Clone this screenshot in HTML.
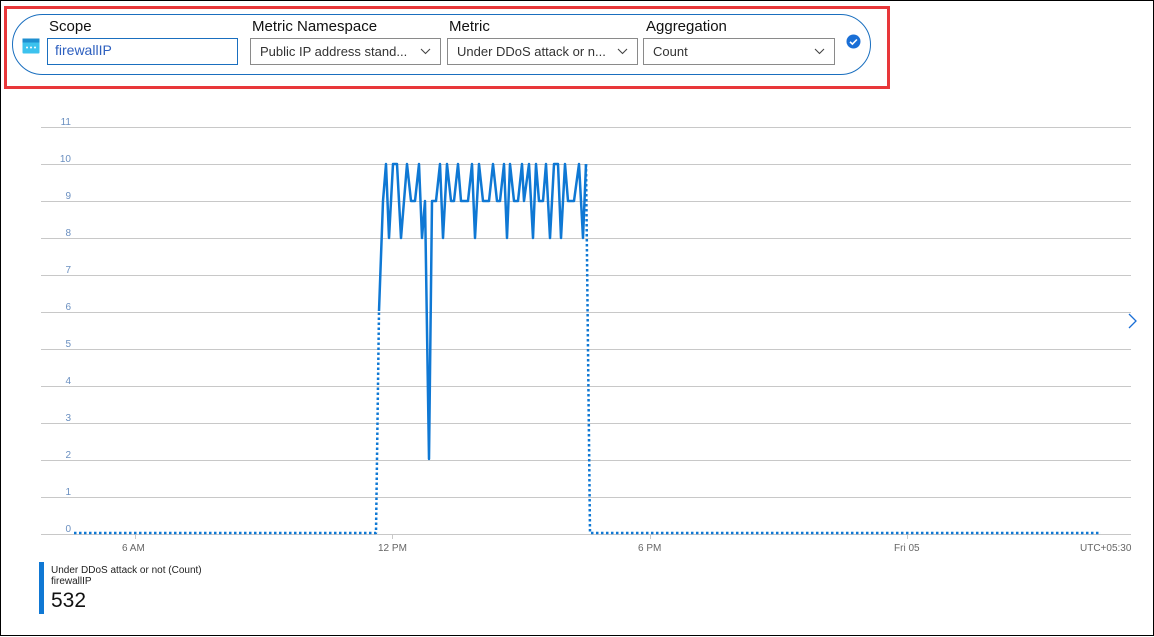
<!DOCTYPE html>
<html><head><meta charset="utf-8"><style>
*{margin:0;padding:0;box-sizing:border-box}
body{width:1154px;height:636px;background:#fff;font-family:"Segoe UI","Liberation Sans",sans-serif;position:relative;overflow:hidden;border:1px solid #000}
.red{position:absolute;left:3px;top:5px;width:886px;height:83px;border:3px solid #e8373a}
.pill{position:absolute;left:11px;top:13px;width:859px;height:61px;border:1px solid #1a6fbf;border-radius:31px}
.lbl{position:absolute;top:17px;font-size:15px;color:#111}
.box{position:absolute;top:37px;height:27px;border:1px solid #8a8a8a;font-size:13px;color:#333;padding:5px 9px;white-space:nowrap}
.box svg{position:absolute;right:9px;top:9px}
.ax{position:absolute;font-size:10px;color:#666}
</style></head><body>
<div class="red"></div>
<div class="pill"></div>
<svg style="position:absolute;left:21px;top:37px" width="18" height="16"><rect x="0.5" y="0.5" width="17" height="15" rx="1" fill="#3cc2ee"/><rect x="0.5" y="0.5" width="17" height="4" fill="#1e8fd0"/><circle cx="5" cy="9.5" r="1" fill="#fff"/><circle cx="9" cy="9.5" r="1" fill="#fff"/><circle cx="13" cy="9.5" r="1" fill="#fff"/></svg>
<div class="lbl" style="left:48px">Scope</div>
<div class="box" style="left:46px;width:191px;border-color:#1a6fbf;color:#2d5fbf;font-size:14px;padding:3px 7px">firewallIP</div>
<div class="lbl" style="left:251px">Metric Namespace</div>
<div class="box" style="left:249px;width:191px">Public IP address stand...<svg width="11" height="7"><path d="M1 1l4.5 4.5L10 1" stroke="#444" stroke-width="1.1" fill="none"/></svg></div>
<div class="lbl" style="left:448px">Metric</div>
<div class="box" style="left:446px;width:191px">Under DDoS attack or n...<svg width="11" height="7"><path d="M1 1l4.5 4.5L10 1" stroke="#444" stroke-width="1.1" fill="none"/></svg></div>
<div class="lbl" style="left:645px">Aggregation</div>
<div class="box" style="left:642px;width:192px">Count<svg width="11" height="7"><path d="M1 1l4.5 4.5L10 1" stroke="#444" stroke-width="1.1" fill="none"/></svg></div>
<svg style="position:absolute;left:845px;top:33px" width="15" height="15"><circle cx="7.5" cy="7.5" r="7" fill="#1a6fd6"/><path d="M4 7.8l2.4 2.3 4.5-4.6" stroke="#fff" stroke-width="1.6" fill="none"/></svg>

<svg style="position:absolute;left:0;top:0" width="1154" height="636">
<g stroke="#c8c8c8" stroke-width="1">
<line x1="40" y1="126.5" x2="1130" y2="126.5"/><line x1="40" y1="163.5" x2="1130" y2="163.5"/><line x1="40" y1="200.5" x2="1130" y2="200.5"/><line x1="40" y1="237.5" x2="1130" y2="237.5"/><line x1="40" y1="274.5" x2="1130" y2="274.5"/><line x1="40" y1="311.5" x2="1130" y2="311.5"/><line x1="40" y1="348.5" x2="1130" y2="348.5"/><line x1="40" y1="385.5" x2="1130" y2="385.5"/><line x1="40" y1="422.5" x2="1130" y2="422.5"/><line x1="40" y1="459.5" x2="1130" y2="459.5"/><line x1="40" y1="496.5" x2="1130" y2="496.5"/><line x1="40" y1="533.5" x2="1130" y2="533.5"/>
<line x1="134.5" y1="533" x2="134.5" y2="538"/><line x1="391.5" y1="533" x2="391.5" y2="538"/><line x1="649.5" y1="533" x2="649.5" y2="538"/><line x1="906.5" y1="533" x2="906.5" y2="538"/>
</g>
<g fill="#6a8fc0" font-size="10" font-family="Liberation Sans,sans-serif" text-anchor="end">
<text x="70" y="124">11</text><text x="70" y="161">10</text><text x="70" y="198">9</text><text x="70" y="235">8</text><text x="70" y="272">7</text><text x="70" y="309">6</text><text x="70" y="346">5</text><text x="70" y="383">4</text><text x="70" y="420">3</text><text x="70" y="457">2</text><text x="70" y="494">1</text><text x="70" y="531">0</text>
</g>
<g stroke="#0f78d4" stroke-width="2.5" fill="none" stroke-linejoin="round">
<path stroke-dasharray="2.5 2.5" d="M73 532 L375 532 L378 310 M585 163 L589 532 L1100 532"/>
<path d="M378 310 L382 200 L385 163 L388 237 L392 163 L396 163 L400 237 L406 163 L410 200 L414 200 L418 163 L421 237 L424 200 L428 458 L431 200 L435 200 L439 163 L442 237 L446 163 L450 200 L453 200 L457 163 L460 200 L467 200 L471 163 L474 237 L478 163 L482 200 L488 200 L492 163 L496 200 L499 200 L503 163 L506 237 L509 163 L513 200 L517 200 L521 163 L523 200 L528 163 L532 237 L535 163 L538 200 L542 200 L545 163 L549 237 L553 163 L557 163 L560 237 L564 163 L567 200 L573 200 L578 163 L582 237 L585 163"/>
</g>
<path d="M1128 313l7 7-7 7" stroke="#1a6fd6" stroke-width="1.3" fill="none"/>
</svg>
<div class="ax" style="left:121px;top:542px">6 AM</div>
<div class="ax" style="left:377px;top:542px">12 PM</div>
<div class="ax" style="left:637px;top:542px">6 PM</div>
<div class="ax" style="left:893px;top:542px">Fri 05</div>
<div class="ax" style="left:1079px;top:542px">UTC+05:30</div>
<div style="position:absolute;left:38px;top:561px;width:5px;height:52px;background:#0f78d4"></div>
<div style="position:absolute;left:50px;top:564px;font-size:10px;color:#222;line-height:11px">Under DDoS attack or not (Count)<br>firewallIP</div>
<div style="position:absolute;left:50px;top:588px;font-size:21px;color:#111">532</div>
</body></html>
